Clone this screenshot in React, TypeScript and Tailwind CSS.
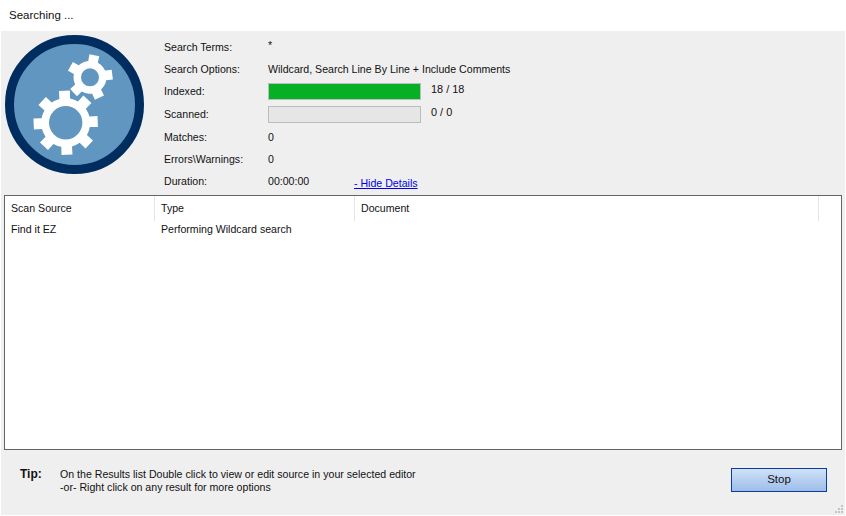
import React from 'react';

const font = { fontFamily: '"Liberation Sans", Arial, sans-serif' };

// builds a toothed gear outline around cx,cy
const gearPath = (cx: number, cy: number, outer: number, root: number, teeth: number, rot: number, tip: number, base: number) => {
  const pts: string[] = [];
  const step = (Math.PI * 2) / teeth;
  for (let i = 0; i < teeth; i++) {
    const a = rot + i * step;
    const p = (r: number, t: number) => `${(cx + r * Math.cos(t)).toFixed(2)} ${(cy + r * Math.sin(t)).toFixed(2)}`;
    pts.push(p(root, a - base), p(outer, a - tip), p(outer, a + tip), p(root, a + base));
    // keeps the rim round between two teeth
    const gap = (step - 2 * base) / 3;
    pts.push(p(root, a + base + gap), p(root, a + base + 2 * gap));
  }
  return `M${pts.join('L')}Z`;
};

const Logo = () => (
  <svg width="140" height="140" viewBox="0 0 140 140" className="shrink-0">
    <circle cx="69.5" cy="69.5" r="65" fill="#6096BF" stroke="#002D5F" strokeWidth="9" />
    <path d={gearPath(60.7, 87.7, 32.5, 24.5, 8, -0.04, 0.17, 0.22)} fill="#fff" />
    <circle cx="60.7" cy="87.7" r="16.7" fill="#6096BF" />
    <path d={gearPath(85, 42.3, 23, 16.5, 5, -0.12, 0.22, 0.3)} fill="#fff" />
    <circle cx="85" cy="42.3" r="9" fill="#6096BF" />
  </svg>
);

const Row = ({ label, children, h = 'h-[22px]' }: { label: string; children: React.ReactNode; h?: string }) => (
  <div className={`flex items-center ${h}`}>
    <div className="w-[104px] shrink-0">{label}</div>
    {children}
  </div>
);

const Bar = ({ pct, text }: { pct: number; text: string }) => (
  <div className="flex items-center">
    <div className="w-[153px] h-[17px] bg-[#e6e6e6] border border-[#bcbcbc]">
      <div className="h-full bg-[#06b025]" style={{ width: `${pct}%` }} />
    </div>
    <span className="ml-[10px] -mt-[4px] text-[10.9px]">{text}</span>
  </div>
);

const App: React.FC = () => {
  return (
    <div style={font} className="w-[846px] h-[516px] bg-white text-[10.6px] leading-none text-[#111] overflow-hidden">
      <div className="h-[31px] flex items-center pl-[9px] text-[11.5px]">Searching ...</div>
      <div className="relative ml-[1px] w-[844px] h-[484px] bg-[#efefef] flex flex-col">
        <div className="flex h-[164px]">
          <div className="pl-[4px] pt-[4px] w-[163px] shrink-0">
            <Logo />
          </div>
          <div className="pt-[5px] w-full">
            <Row label="Search Terms:">
              <span className="-mt-[3px]">*</span>
            </Row>
            <Row label="Search Options:">Wildcard, Search Line By Line + Include Comments</Row>
            <Row label="Indexed:"><Bar pct={100} text="18 / 18" /></Row>
            <Row label="Scanned:" h="h-[24px]"><Bar pct={0} text="0 / 0" /></Row>
            <Row label="Matches:">0</Row>
            <Row label="Errors\Warnings:">0</Row>
            <Row label="Duration:">
              <span className="w-[86px]">00:00:00</span>
              <a href="#" className="text-[#0000ee] underline mt-[4px]">- Hide Details</a>
            </Row>
          </div>
        </div>
        <div className="ml-[3px] w-[838px] h-[255px] bg-white border border-[#646464]">
          <div className="flex h-[25px]">
            <div className="w-[150px] pl-[6px] flex items-center border-r border-[#e5e5e5]">Scan Source</div>
            <div className="w-[200px] pl-[6px] flex items-center border-r border-[#e5e5e5]">Type</div>
            <div className="w-[464px] pl-[6px] flex items-center border-r border-[#e5e5e5]">Document</div>
          </div>
          <div className="flex h-[17px] items-center">
            <div className="w-[150px] pl-[6px]">Find it EZ</div>
            <div className="pl-[6px]">Performing Wildcard search</div>
          </div>
        </div>
        <div className="flex items-start">
          <div className="w-[59px] pl-[19px] pt-[18px] font-bold text-[12px]">Tip:</div>
          <div className="pt-[18px] leading-[13px]">
            <div>On the Results list Double click to view or edit source in your selected editor</div>
            <div>-or- Right click on any result for more options</div>
          </div>
          <button className="ml-auto mr-[18px] mt-[18px] w-[96px] h-[24px] border-[1.5px] border-[#0a3d99] bg-gradient-to-b from-[#d0e2f8] to-[#9dbde9] text-[#111] text-[11.5px]">
            Stop
          </button>
        </div>
        <svg className="absolute right-[1px] bottom-[1px]" width="10" height="10" viewBox="0 0 10 10">
          <path d="M7 1h2v2H7zM4 4h2v2H4zM7 4h2v2H7zM1 7h2v2H1zM4 7h2v2H4zM7 7h2v2H7z" fill="#c4c4c4" />
        </svg>
      </div>
    </div>
  );
};

export default App;
